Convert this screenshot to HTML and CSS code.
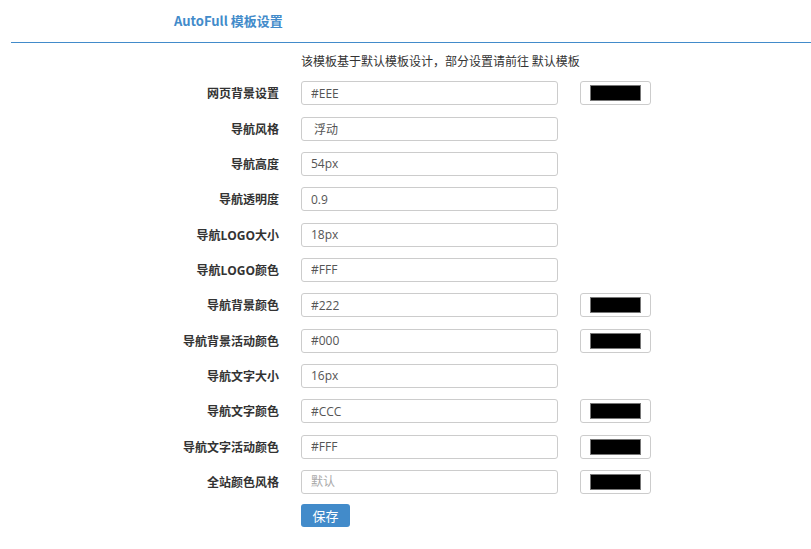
FILE: index.html
```html
<!DOCTYPE html>
<html lang="zh-CN">
<head>
<meta charset="utf-8">
<title>AutoFull 模板设置</title>
<link rel="stylesheet" href="styles.css">
</head>
<body>
<div class="page">
  <div class="header">
    <h1 class="title">AutoFull 模板设置</h1>
  </div>
  <div class="form">
    <div class="row intro-row">
      <div class="label"></div>
      <div class="intro">该模板基于默认模板设计，部分设置请前往 默认模板</div>
    </div>
    <div class="row">
      <label class="label">网页背景设置</label>
      <input class="field" type="text" value="#EEE">
      <span class="swatch"><span class="chip"></span></span>
    </div>
    <div class="row">
      <label class="label">导航风格</label>
      <input class="field" type="text" value=" 浮动">
    </div>
    <div class="row">
      <label class="label">导航高度</label>
      <input class="field" type="text" value="54px">
    </div>
    <div class="row">
      <label class="label">导航透明度</label>
      <input class="field" type="text" value="0.9">
    </div>
    <div class="row">
      <label class="label">导航LOGO大小</label>
      <input class="field" type="text" value="18px">
    </div>
    <div class="row">
      <label class="label">导航LOGO颜色</label>
      <input class="field" type="text" value="#FFF">
    </div>
    <div class="row">
      <label class="label">导航背景颜色</label>
      <input class="field" type="text" value="#222">
      <span class="swatch"><span class="chip"></span></span>
    </div>
    <div class="row">
      <label class="label">导航背景活动颜色</label>
      <input class="field" type="text" value="#000">
      <span class="swatch"><span class="chip"></span></span>
    </div>
    <div class="row">
      <label class="label">导航文字大小</label>
      <input class="field" type="text" value="16px">
    </div>
    <div class="row">
      <label class="label">导航文字颜色</label>
      <input class="field" type="text" value="#CCC">
      <span class="swatch"><span class="chip"></span></span>
    </div>
    <div class="row">
      <label class="label">导航文字活动颜色</label>
      <input class="field" type="text" value="#FFF">
      <span class="swatch"><span class="chip"></span></span>
    </div>
    <div class="row">
      <label class="label">全站颜色风格</label>
      <input class="field" type="text" placeholder="默认">
      <span class="swatch"><span class="chip"></span></span>
    </div>
    <div class="row actions">
      <div class="label"></div>
      <button class="btn" type="button">保存</button>
    </div>
  </div>
</div>
</body>
</html>
```

FILE: styles.css
```css
* { box-sizing: border-box; }

body {
  margin: 0;
  background: #fff;
  font-family: "Open Sans", "Noto Sans CJK SC", sans-serif;
  font-size: 12px;
  color: #333;
}

.page {
  padding-left: 11px;
}

.header {
  height: 43px;
  border-bottom: 1px solid #428bca;
  display: flex;
  align-items: center;
  padding-left: 163px;
}

.title {
  margin: 0;
  font-family: "Noto Sans CJK SC", sans-serif;
  font-size: 13px;
  font-weight: bold;
  color: #428bca;
  line-height: 20px;
}

.form {
  display: flex;
  flex-direction: column;
  gap: 11.33px;
  padding-top: 8px;
}

.row {
  display: flex;
  align-items: center;
  height: 24px;
}

.intro-row {
  height: 20px;
  margin-bottom: -1px;
}

.actions {
  margin-top: -1px;
  align-items: flex-start;
}

.label {
  width: 268px;
  flex: none;
  text-align: right;
  font-weight: bold;
  color: #333;
  margin-right: 22px;
  font-size: 12px;
}

.intro {
  font-family: "Noto Sans CJK SC", sans-serif;
  color: #333;
  font-size: 12px;
  line-height: 20px;
}

.field {
  width: 257px;
  height: 24px;
  border: 1px solid #ccc;
  border-radius: 3px;
  padding: 0 9px;
  font-family: "Open Sans", "Noto Sans CJK SC", sans-serif;
  font-size: 12px;
  color: #555;
  background: #fff;
  outline: none;
}

.field::placeholder {
  color: #aaa;
}

.swatch {
  margin-left: 22px;
  width: 71px;
  height: 24px;
  border: 1px solid #ccc;
  border-radius: 3px;
  display: flex;
  align-items: center;
  justify-content: center;
  background: #fff;
}

.chip {
  width: 51px;
  height: 16px;
  background: #000;
  border: 1px solid #777;
}

.btn {
  width: 49px;
  height: 23px;
  border: none;
  border-radius: 3px;
  background: #428bca;
  color: #fff;
  font-family: "Noto Sans CJK SC", sans-serif;
  font-size: 13px;
  padding: 0;
  cursor: pointer;
}
```
